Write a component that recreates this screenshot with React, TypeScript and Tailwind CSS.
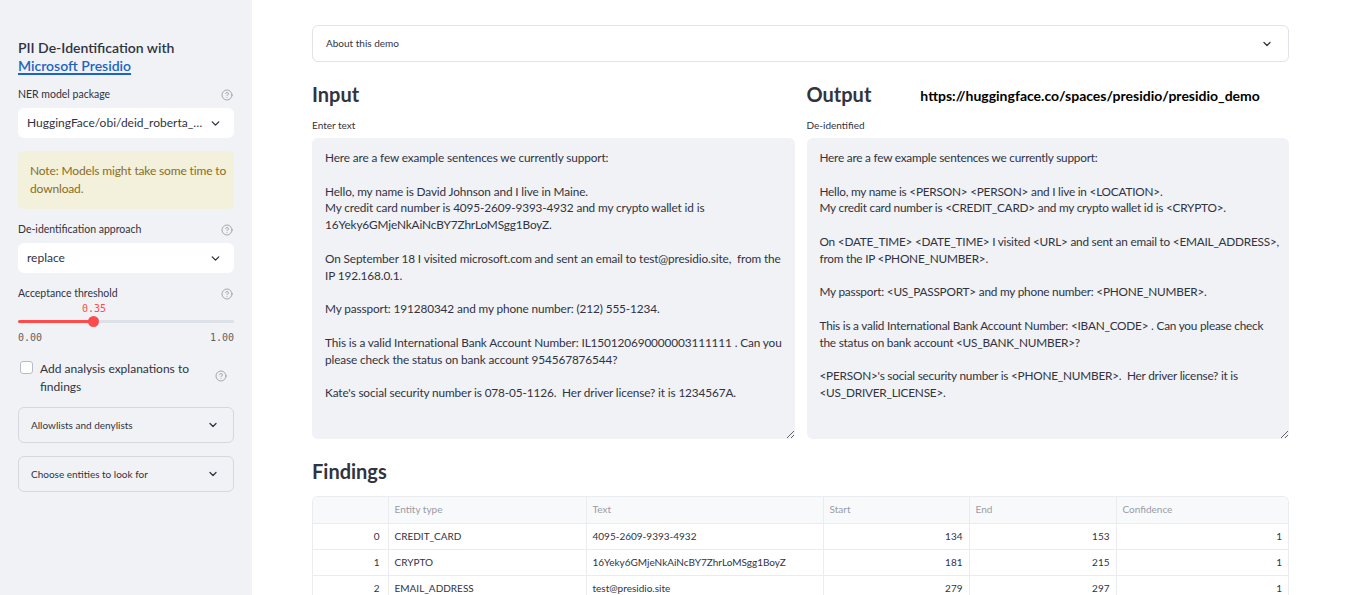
import { ChevronDown, CircleHelp } from "lucide-react";
import type { ReactNode } from "react";

const font = "font-['Lato',sans-serif]";

const inputText = `Here are a few example sentences we currently support:

Hello, my name is David Johnson and I live in Maine.
My credit card number is 4095-2609-9393-4932 and my crypto wallet id is 16Yeky6GMjeNkAiNcBY7ZhrLoMSgg1BoyZ.

On September 18 I visited microsoft.com and sent an email to test@presidio.site,  from the IP 192.168.0.1.

My passport: 191280342 and my phone number: (212) 555-1234.

This is a valid International Bank Account Number: IL150120690000003111111 . Can you please check the status on bank account 954567876544?

Kate's social security number is 078-05-1126.  Her driver license? it is 1234567A.`;

// wrapped by hand to match the line breaks of the rendered output box
const outputText = `Here are a few example sentences we currently support:

Hello, my name is <PERSON> <PERSON> and I live in <LOCATION>.
My credit card number is <CREDIT_CARD> and my crypto wallet id is <CRYPTO>.

On <DATE_TIME> <DATE_TIME> I visited <URL> and sent an email to <EMAIL_ADDRESS>,
from the IP <PHONE_NUMBER>.

My passport: <US_PASSPORT> and my phone number: <PHONE_NUMBER>.

This is a valid International Bank Account Number: <IBAN_CODE> . Can you please check
the status on bank account <US_BANK_NUMBER>?

<PERSON>'s social security number is <PHONE_NUMBER>.  Her driver license? it is
<US_DRIVER_LICENSE>.`;

const findings = [
  { type: "CREDIT_CARD", text: "4095-2609-9393-4932", start: 134, end: 153, conf: 1 },
  { type: "CRYPTO", text: "16Yeky6GMjeNkAiNcBY7ZhrLoMSgg1BoyZ", start: 181, end: 215, conf: 1 },
  { type: "EMAIL_ADDRESS", text: "test@presidio.site", start: 279, end: 297, conf: 1 },
];

function Help() {
  return <CircleHelp size={12} strokeWidth={1.5} className="text-[#8d8f96]" />;
}

function Label({ children, help }: { children: ReactNode; help?: boolean }) {
  return (
    <div className="flex h-[14px] items-center justify-between text-[10.5px] text-[#31333f]">
      <span>{children}</span>
      {help && <span className="mr-[1px]"><Help /></span>}
    </div>
  );
}

function Select({ value }: { value: string }) {
  return (
    <div className="mt-[6px] flex h-[30px] items-center justify-between rounded-[6px] bg-white pl-[9px] pr-[12px] text-[12px] text-[#31333f]">
      <span>{value}</span>
      <ChevronDown size={13} strokeWidth={2.5} className="text-[#31333f]" />
    </div>
  );
}

function Expander({ title, className = "" }: { title: string; className?: string }) {
  return (
    <div
      className={`flex h-[36px] items-center justify-between rounded-[6px] border border-[#d6d8de] pl-[12px] pr-[14px] text-[10px] text-[#31333f] ${className}`}
    >
      <span>{title}</span>
      <ChevronDown size={12} strokeWidth={2.5} />
    </div>
  );
}

function Sidebar() {
  return (
    <aside className="w-[252px] shrink-0 bg-[#f0f2f6] px-[18px] pt-[39px]">
      <h2 className="text-[14px] font-semibold leading-[18px] text-[#31333f]">
        PII De-Identification with
        <br />
        <a className="text-[#1c64c4] underline decoration-[1.5px] underline-offset-2">Microsoft Presidio</a>
      </h2>

      <div className="mt-[13px]">
        <Label help>NER model package</Label>
        <Select value="HuggingFace/obi/deid_roberta_…" />
      </div>

      <div className="mt-[13px] rounded-[6px] bg-[#f3f0db] py-[11px] pl-[12px] pr-[4px] text-[12px] leading-[18px] tracking-[-0.15px] text-[#8a6d1e]">
        Note: Models might take some time to download.
      </div>

      <div className="mt-[14px]">
        <Label help>De-identification approach</Label>
        <Select value="replace" />
      </div>

      <div className="mt-[14px]">
        <Label help>Acceptance threshold</Label>
        <div className="relative h-[29px]">
          <div className="absolute left-[64px] top-0 font-['DejaVu_Sans_Mono',monospace] text-[10px] text-[#ff4b4b]">
            0.35
          </div>
          <div className="absolute left-0 right-0 top-[19px] h-[3px] rounded bg-[#dde0e6]" />
          <div className="absolute left-0 top-[19px] h-[3px] w-[76px] rounded bg-[#ff4b4b]" />
          <div className="absolute left-[70px] top-[15px] h-[11px] w-[11px] rounded-full bg-[#ff4b4b]" />
        </div>
        <div className="flex justify-between font-['DejaVu_Sans_Mono',monospace] text-[10px] text-[#5f6169]">
          <span>0.00</span>
          <span>1.00</span>
        </div>
      </div>

      <div className="mt-[15px] flex items-start gap-[7px] pl-[2px]">
        <div className="mt-[1px] h-[13px] w-[13px] shrink-0 rounded-[3px] border border-[#b9bcc4] bg-white" />
        <div className="w-[150px] text-[12px] leading-[18px] text-[#31333f]">Add analysis explanations to findings</div>
        <div className="ml-auto mr-[7px] mt-[10px]">
          <Help />
        </div>
      </div>

      <Expander title="Allowlists and denylists" className="mt-[11px]" />
      <Expander title="Choose entities to look for" className="mt-[13px]" />
    </aside>
  );
}

function TextBox({ value, noWrap }: { value: string; noWrap?: boolean }) {
  return (
    <textarea
      readOnly
      wrap={noWrap ? "off" : "soft"}
      defaultValue={value}
      className={`mt-[6px] block h-[301px] w-full resize-y overflow-hidden rounded-[6px] bg-[#f0f2f6] pl-[13px] pr-[10px] pt-[12px] text-[11.8px] leading-[16.8px] text-[#31333f] outline-none ${
        noWrap ? "tracking-[-0.22px]" : "tracking-[-0.12px]"
      } ${font}`}
    />
  );
}

function Findings() {
  const th = "h-[26px] border-b border-r border-[#eaecef] px-[6px] text-left text-[10px] font-normal text-[#9a9ca3]";
  const td = "h-[26px] border-b border-r border-[#eaecef] px-[6px] text-[10px] text-[#31333f]";
  return (
    <div className="mt-[10px] overflow-hidden rounded-t-[6px] border border-b-0 border-[#eaecef]">
      <table className="w-full table-fixed border-collapse">
        <colgroup>
          <col className="w-[75px]" />
          <col className="w-[198px]" />
          <col className="w-[237px]" />
          <col className="w-[146px]" />
          <col className="w-[147px]" />
          <col />
        </colgroup>
        <thead className="bg-[#f8f9fb]">
          <tr>
            <th className={th}></th>
            <th className={th}>Entity type</th>
            <th className={th}>Text</th>
            <th className={th}>Start</th>
            <th className={th}>End</th>
            <th className={`${th} border-r-0`}>Confidence</th>
          </tr>
        </thead>
        <tbody>
          {findings.map((f, i) => (
            <tr key={i}>
              <td className={`${td} pr-[8px] text-right text-[#9a9ca3]`}>{i}</td>
              <td className={td}>{f.type}</td>
              <td className={td}>{f.text}</td>
              <td className={`${td} text-right`}>{f.start}</td>
              <td className={`${td} text-right`}>{f.end}</td>
              <td className={`${td} border-r-0 text-right`}>{f.conf}</td>
            </tr>
          ))}
        </tbody>
      </table>
    </div>
  );
}

export default function App() {
  return (
    <div className={`flex h-[595px] overflow-hidden bg-white ${font}`}>
      <Sidebar />
      <main className="min-w-0 flex-1 pl-[60px] pr-[59px] pt-[25px]">
        <Expander title="About this demo" className="h-[37px] border-[#e1e3e8] !pl-[13px] !pr-[15px]" />

        <div className="mt-[17px] grid grid-cols-2 gap-[12px]">
          <div>
            <h1 className="h-[30px] text-[20px] font-bold leading-[30px] text-[#31333f]">Input</h1>
            <div className="mt-[9px] text-[10px] leading-[14px] text-[#31333f]">Enter text</div>
            <TextBox value={inputText} />
          </div>
          <div>
            <div className="flex h-[30px] items-center">
              <h1 className="text-[20px] font-bold leading-[30px] text-[#31333f]">Output</h1>
              <span className="ml-[49px] mt-[3px] text-[14px] font-bold text-black">
                https://huggingface.co/spaces/presidio/presidio_demo
              </span>
            </div>
            <div className="mt-[9px] text-[10px] leading-[14px] text-[#31333f]">De-identified</div>
            <TextBox value={outputText} noWrap />
          </div>
        </div>

        <h1 className="mt-[17px] h-[30px] text-[20px] font-bold leading-[30px] text-[#31333f]">Findings</h1>
        <Findings />
      </main>
    </div>
  );
}
